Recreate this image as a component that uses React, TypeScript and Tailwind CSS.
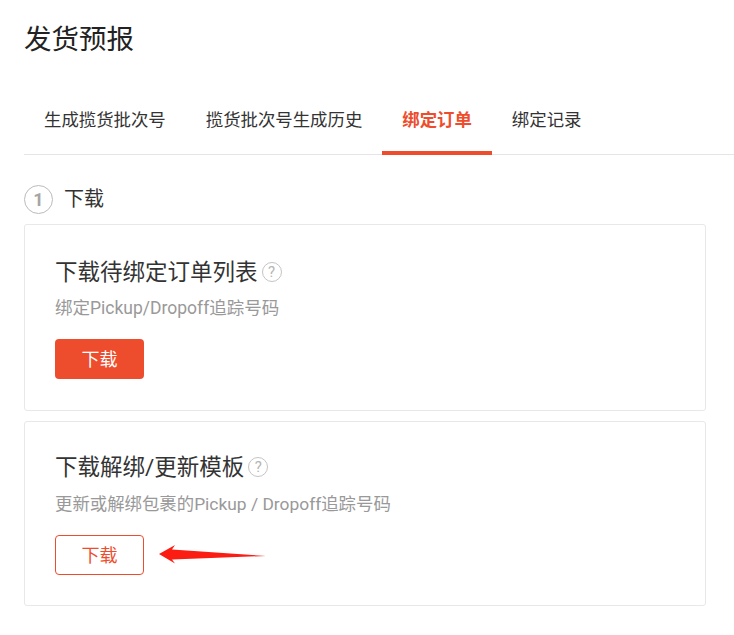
import React from "react";

const tabs = ["生成揽货批次号", "揽货批次号生成历史", "绑定订单", "绑定记录"];

function HelpIcon() {
  return (
    <span className="ml-[4px] flex h-[20px] w-[20px] shrink-0 items-center justify-center rounded-full border border-[#c4c4c4] text-[15px] leading-none text-[#b5b5b5]">
      ?
    </span>
  );
}

function Arrow() {
  return (
    <svg className="absolute left-[133px] top-[122px]" width="110" height="22" viewBox="0 0 110 22">
      <path d="M1 10 L17 1 L14 5.5 L108 12 L14 15.5 L17 19.5 Z" fill="#fb1c12" />
    </svg>
  );
}

export default function App() {
  return (
    <div className="min-h-[635px] w-[734px] overflow-hidden bg-white pl-[24px] font-['Roboto','Noto_Sans_CJK_SC',sans-serif]">
      <h1 className="pt-[21px] text-[27.5px] leading-[38px] font-normal text-[#222]">发货预报</h1>

      <div className="mt-[39px] flex h-[57px] border-b border-[#e5e5e5]">
        {tabs.map((tab, i) => (
          <div
            key={tab}
            className={
              i === 2
                ? "h-[57px] border-b-4 border-[#ee4d2d] px-[20px] pt-[10px] text-[17.4px] leading-[24px] font-bold text-[#ee4d2d]"
                : "h-[56px] px-[20px] pt-[10px] text-[17.4px] leading-[24px] text-[#333]"
            }
          >
            {tab}
          </div>
        ))}
      </div>

      <div className="mt-[30px] flex items-center">
        <span className="flex h-[29px] w-[29px] items-center justify-center rounded-full border border-[#bbb] text-[18px] font-bold text-[#a5a5a5]">
          1
        </span>
        <span className="ml-[11px] text-[20px] leading-[29px] text-[#333]">下载</span>
      </div>

      <div className="mt-[10px] flex h-[187px] w-[682px] flex-col items-start rounded-[3px] border border-[#e8e8e8] pt-[32px] pl-[30px]">
        <div className="flex items-center">
          <span className="text-[22.5px] leading-[30px] text-[#333]">下载待绑定订单列表</span>
          <HelpIcon />
        </div>
        <p className="mt-[9px] text-[17.5px] leading-[25px] text-[#999]">绑定Pickup/Dropoff追踪号码</p>
        <button className="mt-[18px] h-[40px] w-[89px] rounded-[4px] bg-[#ee4d2d] text-[18px] text-white">
          下载
        </button>
      </div>

      <div className="relative mt-[10px] flex h-[185px] w-[682px] flex-col items-start rounded-[3px] border border-[#e8e8e8] pt-[30px] pl-[30px]">
        <div className="flex items-center">
          <span className="text-[22.5px] leading-[30px] text-[#333]">下载解绑/更新模板</span>
          <HelpIcon />
        </div>
        <p className="mt-[10px] text-[17.4px] leading-[25px] text-[#999]">更新或解绑包裹的Pickup / Dropoff追踪号码</p>
        <button className="mt-[18px] h-[40px] w-[89px] rounded-[4px] border border-[#ee4d2d] text-[18px] text-[#ee4d2d]">
          下载
        </button>
        <Arrow />
      </div>
    </div>
  );
}
